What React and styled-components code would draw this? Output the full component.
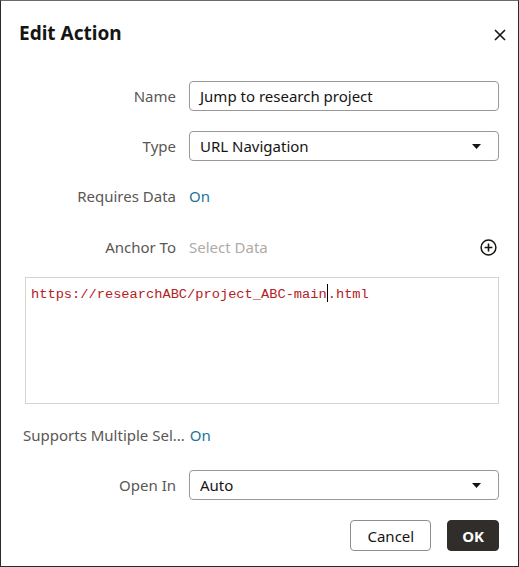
import React from "react";
import styled, { createGlobalStyle } from "styled-components";

const Global = createGlobalStyle`
  html, body { margin: 0; padding: 0; background: #fff; }
  * { box-sizing: border-box; }
`;

const Dialog = styled.div`
  width: 519px;
  height: 567px;
  border: 1px solid #2b2b2b;
  border-top-color: #6b6b6b;
  background: #fff;
  font-family: "Noto Sans", "Open Sans", sans-serif;
  color: #161513;
  display: flex;
  flex-direction: column;
`;

const Header = styled.div`
  height: 80px;
  display: flex;
  align-items: flex-start;
  justify-content: space-between;
  padding: 18px 11px 0 18px;
`;

const Title = styled.h1`
  margin: 0;
  font-size: 19px;
  font-weight: 700;
  line-height: 28px;
  letter-spacing: 0;
`;

const CloseButton = styled.button`
  border: none;
  background: none;
  padding: 0;
  margin-top: 9px;
  width: 14px;
  height: 14px;
  display: flex;
  align-items: center;
  justify-content: center;
  cursor: pointer;
`;

const Body = styled.div`
  display: flex;
  flex-direction: column;
  padding: 0 19px 0 22px;
`;

const Row = styled.div`
  display: grid;
  grid-template-columns: 153px 1fr auto;
  column-gap: 13px;
  align-items: center;
  height: 30px;
  margin-bottom: ${(p) => p.$mb ?? 20}px;
`;

const WideRow = styled.div`
  display: flex;
  align-items: center;
  gap: 5px;
  height: 30px;
  margin-bottom: 20px;
`;

const Label = styled.div`
  font-size: 15px;
  color: #5a5754;
  text-align: right;
  white-space: nowrap;
`;

const Field = styled.div`
  grid-column: 2 / -1;
  height: 30px;
  border: 1px solid #9a9896;
  border-radius: 4px;
  padding: 0 17px 0 10px;
  display: flex;
  align-items: center;
  justify-content: space-between;
  font-size: 15px;
  color: #161513;
`;

const Value = styled.div`
  font-size: 15px;
  color: ${(p) => (p.$muted ? "#aeaba8" : "#1f7399")};
`;

const IconBtn = styled.button`
  border: none;
  background: none;
  padding: 0;
  margin-right: 2px;
  display: flex;
  align-items: center;
  cursor: pointer;
`;

const UrlBox = styled.div`
  height: 127px;
  margin: -5px 0 16px 2px;
  border: 1px solid #d4d4d4;
  padding: 6px 5px;
  font-family: "Liberation Mono", "DejaVu Sans Mono", monospace;
  font-size: 13.7px;
  line-height: 18px;
  color: #b42025;
`;

const Caret = styled.span`
  display: inline-block;
  width: 1px;
  height: 18px;
  background: #000;
  vertical-align: -4px;
`;

const Footer = styled.div`
  display: flex;
  justify-content: flex-end;
  gap: 16px;
  padding: 0 19px 0 0;
`;

const Button = styled.button`
  height: 31px;
  padding: 0 ${(p) => (p.$primary ? 14 : 16)}px;
  border-radius: 4px;
  border: 1px solid ${(p) => (p.$primary ? "#312d2a" : "#8f8c89")};
  background: ${(p) => (p.$primary ? "#312d2a" : "#fff")};
  color: ${(p) => (p.$primary ? "#fff" : "#161513")};
  font-family: "Noto Sans", "Open Sans", sans-serif;
  font-size: 15px;
  font-weight: ${(p) => (p.$primary ? 700 : 400)};
  cursor: pointer;
`;

const Chevron = () => (
  <svg width="9" height="5" viewBox="0 0 9 5">
    <path d="M0 0h9L4.5 5z" fill="#161513" />
  </svg>
);

export default function App() {
  return (
    <>
      <Global />
      <Dialog>
        <Header>
          <Title>Edit Action</Title>
          <CloseButton aria-label="Close">
            <svg width="12" height="12" viewBox="0 0 12 12">
              <path d="M1 1l10 10M11 1L1 11" stroke="#161513" strokeWidth="1.6" />
            </svg>
          </CloseButton>
        </Header>
        <Body>
          <Row>
            <Label>Name</Label>
            <Field>Jump to research project</Field>
          </Row>
          <Row>
            <Label>Type</Label>
            <Field>
              URL Navigation
              <Chevron />
            </Field>
          </Row>
          <Row $mb={21}>
            <Label>Requires Data</Label>
            <Value>On</Value>
          </Row>
          <Row>
            <Label>Anchor To</Label>
            <Value $muted>Select Data</Value>
            <IconBtn aria-label="Add">
              <svg width="17" height="17" viewBox="0 0 17 17">
                <circle cx="8.5" cy="8.5" r="7.4" fill="none" stroke="#161513" strokeWidth="1.5" />
                <path d="M8.5 4.6v7.8M4.6 8.5h7.8" stroke="#161513" strokeWidth="1.6" />
              </svg>
            </IconBtn>
          </Row>
          <UrlBox>
            https://researchABC/project_ABC-main<Caret />.html
          </UrlBox>
          <WideRow>
            <Label>Supports Multiple Sel...</Label>
            <Value>On</Value>
          </WideRow>
          <Row>
            <Label>Open In</Label>
            <Field>
              Auto
              <Chevron />
            </Field>
          </Row>
        </Body>
        <Footer>
          <Button>Cancel</Button>
          <Button $primary>OK</Button>
        </Footer>
      </Dialog>
    </>
  );
}
